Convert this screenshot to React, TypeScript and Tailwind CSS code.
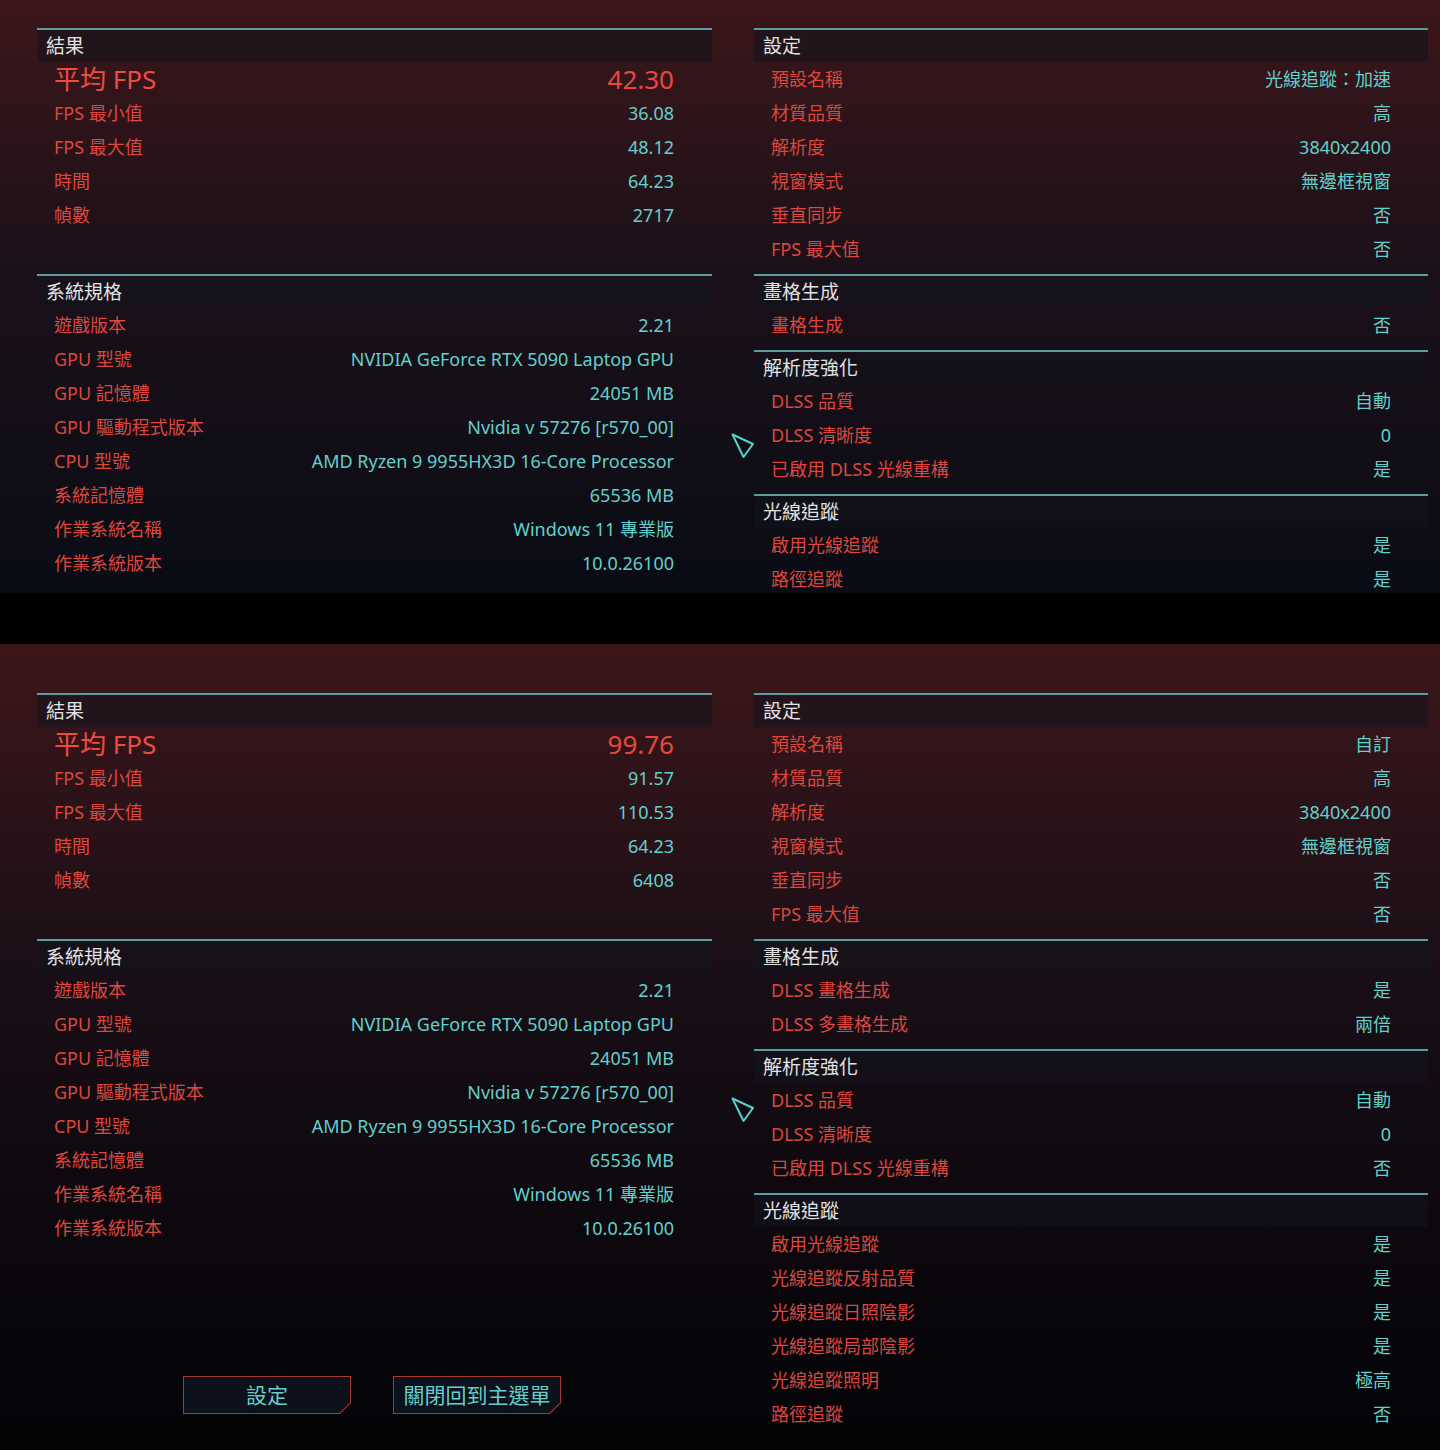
import React from "react";

type Row = { label: string; value: string; big?: boolean };
type Section = { title: string; rows: Row[]; pad?: string };

const sysRows: Row[] = [
  { label: "遊戲版本", value: "2.21" },
  { label: "GPU 型號", value: "NVIDIA GeForce RTX 5090 Laptop GPU" },
  { label: "GPU 記憶體", value: "24051 MB" },
  { label: "GPU 驅動程式版本", value: "Nvidia v 57276 [r570_00]" },
  { label: "CPU 型號", value: "AMD Ryzen 9 9955HX3D 16-Core Processor" },
  { label: "系統記憶體", value: "65536 MB" },
  { label: "作業系統名稱", value: "Windows 11 專業版" },
  { label: "作業系統版本", value: "10.0.26100" },
];

const shots: { left: Section[]; right: Section[] }[] = [
  {
    left: [
      {
        title: "結果",
        pad: "pb-[42px]",
        rows: [
          { label: "平均 FPS", value: "42.30", big: true },
          { label: "FPS 最小值", value: "36.08" },
          { label: "FPS 最大值", value: "48.12" },
          { label: "時間", value: "64.23" },
          { label: "幀數", value: "2717" },
        ],
      },
      { title: "系統規格", rows: sysRows },
    ],
    right: [
      {
        title: "設定",
        rows: [
          { label: "預設名稱", value: "光線追蹤：加速" },
          { label: "材質品質", value: "高" },
          { label: "解析度", value: "3840x2400" },
          { label: "視窗模式", value: "無邊框視窗" },
          { label: "垂直同步", value: "否" },
          { label: "FPS 最大值", value: "否" },
        ],
      },
      { title: "畫格生成", rows: [{ label: "畫格生成", value: "否" }] },
      {
        title: "解析度強化",
        rows: [
          { label: "DLSS 品質", value: "自動" },
          { label: "DLSS 清晰度", value: "0" },
          { label: "已啟用 DLSS 光線重構", value: "是" },
        ],
      },
      {
        title: "光線追蹤",
        rows: [
          { label: "啟用光線追蹤", value: "是" },
          { label: "路徑追蹤", value: "是" },
        ],
      },
    ],
  },
  {
    left: [
      {
        title: "結果",
        pad: "pb-[42px]",
        rows: [
          { label: "平均 FPS", value: "99.76", big: true },
          { label: "FPS 最小值", value: "91.57" },
          { label: "FPS 最大值", value: "110.53" },
          { label: "時間", value: "64.23" },
          { label: "幀數", value: "6408" },
        ],
      },
      { title: "系統規格", rows: sysRows },
    ],
    right: [
      {
        title: "設定",
        rows: [
          { label: "預設名稱", value: "自訂" },
          { label: "材質品質", value: "高" },
          { label: "解析度", value: "3840x2400" },
          { label: "視窗模式", value: "無邊框視窗" },
          { label: "垂直同步", value: "否" },
          { label: "FPS 最大值", value: "否" },
        ],
      },
      {
        title: "畫格生成",
        rows: [
          { label: "DLSS 畫格生成", value: "是" },
          { label: "DLSS 多畫格生成", value: "兩倍" },
        ],
      },
      {
        title: "解析度強化",
        rows: [
          { label: "DLSS 品質", value: "自動" },
          { label: "DLSS 清晰度", value: "0" },
          { label: "已啟用 DLSS 光線重構", value: "否" },
        ],
      },
      {
        title: "光線追蹤",
        rows: [
          { label: "啟用光線追蹤", value: "是" },
          { label: "光線追蹤反射品質", value: "是" },
          { label: "光線追蹤日照陰影", value: "是" },
          { label: "光線追蹤局部陰影", value: "是" },
          { label: "光線追蹤照明", value: "極高" },
          { label: "路徑追蹤", value: "否" },
        ],
      },
    ],
  },
];

function Block({ s, right }: { s: Section; right?: boolean }) {
  return (
    <div className={s.pad ?? "pb-[8px]"}>
      <div className="h-[2px] bg-[#5c9c9d]" />
      <div className="h-[32px] flex items-center pl-[9px] bg-[#12141e]/55 text-[19px] text-[#e2e2e2]">
        {s.title}
      </div>
      {s.rows.map((r) => (
        <div
          key={r.label}
          className={`h-[34px] flex items-center justify-between pl-[17px] ${right ? "pr-[37px]" : "pr-[38px]"}`}
        >
          {r.big ? (
            <>
              <span className="text-[26px] text-[#ef4b43]">{r.label}</span>
              <span className="text-[26px] text-[#ea4740]">{r.value}</span>
            </>
          ) : (
            <>
              <span className="text-[18px] text-[#dd473e]">{r.label}</span>
              <span className="text-[18px] text-[#62d0cc]">{r.value}</span>
            </>
          )}
        </div>
      ))}
    </div>
  );
}

function HudButton({ label }: { label: string }) {
  return (
    <div className="w-[168px] h-[38px] p-px bg-[#a63a32] [clip-path:polygon(0_0,168px_0,168px_27px,157px_38px,0_38px)]">
      <div className="w-full h-full flex items-center justify-center bg-[#0c111c] text-[21px] text-[#66cfcb] [clip-path:polygon(0_0,166px_0,166px_25.5px,155.5px_36px,0_36px)]">
        {label}
      </div>
    </div>
  );
}

function Cursor({ top }: { top: string }) {
  return (
    <svg className={`absolute left-[730px] ${top}`} width="26" height="28" viewBox="0 0 26 28">
      <path d="M2.5 2.5 L23 12 L13.5 25 Z" fill="none" stroke="#56d2ce" strokeWidth="2" strokeLinejoin="round" />
    </svg>
  );
}

export default function App() {
  return (
    <div className="w-[1440px] h-[1450px] bg-black font-['Noto_Sans','Noto_Sans_CJK_TC',sans-serif] leading-none">
      <div className="relative h-[593px] overflow-hidden pt-[28px] bg-linear-to-b from-[#3c1619] via-[#1c1019] via-45% to-[#090c15]">
        <div className="flex gap-[42px] pl-[37px] pr-[12px]">
          <div className="w-[675px]">
            {shots[0].left.map((s) => <Block key={s.title} s={s} />)}
          </div>
          <div className="w-[674px]">
            {shots[0].right.map((s) => <Block key={s.title} s={s} right />)}
          </div>
        </div>
        <Cursor top="top-[432px]" />
      </div>

      <div className="h-[51px] bg-black" />

      <div className="relative h-[806px] overflow-hidden pt-[49px] bg-linear-to-b from-[#3c1619] via-[#190e16] via-42% to-[#040407]">
        <div className="flex gap-[42px] pl-[37px] pr-[12px]">
          <div className="w-[675px]">
            {shots[1].left.map((s) => <Block key={s.title} s={s} />)}
            <div className="flex gap-[42px] pl-[146px] mt-[123px]">
              <HudButton label="設定" />
              <HudButton label="關閉回到主選單" />
            </div>
          </div>
          <div className="w-[674px]">
            {shots[1].right.map((s) => <Block key={s.title} s={s} right />)}
          </div>
        </div>
        <Cursor top="top-[452px]" />
      </div>
    </div>
  );
}
